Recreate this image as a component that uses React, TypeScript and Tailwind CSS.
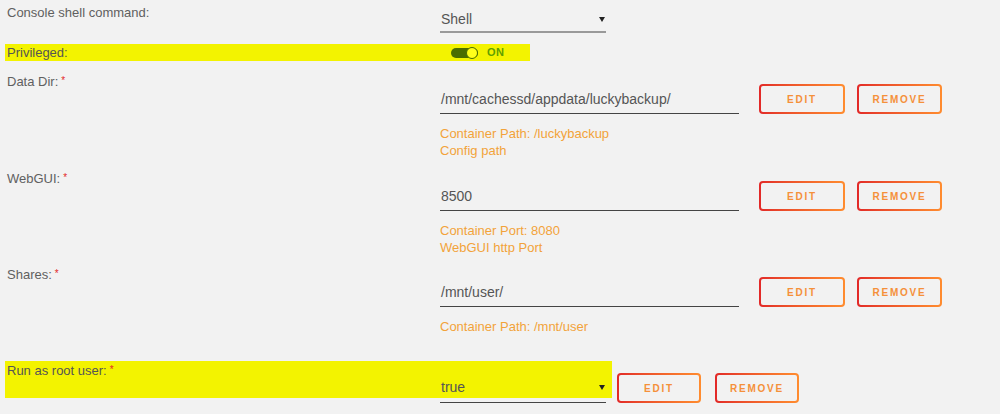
import React from 'react';

const sans = "font-['Liberation_Sans',Arial,sans-serif]";

// red marker for required fields
const Required = () => (
  <span className="relative -top-[2px] ml-[3px] text-[10px] leading-none text-[#e22828]">*</span>
);

const Caret = () => (
  <svg width="6" height="5" viewBox="0 0 6 5" className="shrink-0">
    <polygon points="0,0 6,0 3,5" fill="#222" />
  </svg>
);

interface ActionButtonProps {
  label: string;
  width: string;
}

// gradient-outlined EDIT / REMOVE buttons
const ActionButton: React.FC<ActionButtonProps> = ({ label, width }) => (
  <div className={`h-[30px] ${width} rounded-[4px] bg-linear-to-r from-[#e22828] to-[#ff8c2f] p-[2px]`}>
    <div className="flex h-full items-center justify-center rounded-[2px] bg-[#f2f2f2] text-[10px] font-bold tracking-[1.8px] text-[#f5903a]">
      {label}
    </div>
  </div>
);

interface PathRowProps {
  label: string;
  value: string;
  notes: string[];
  height: string;
}

const PathRow: React.FC<PathRowProps> = ({ label, value, notes, height }) => (
  <div className={`flex pl-[7px] ${height}`}>
    <div className="w-[433px] text-[13px] leading-[17px] text-[#606060]">
      {label}:<Required />
    </div>
    <div>
      <div className="flex items-end">
        <div className="w-[299px] border-b border-[#444] pt-[18px] pb-[5px] pl-[1px] text-[14px] leading-[17px] text-[#555]">
          {value}
        </div>
        <div className="ml-[20px] flex gap-[12px]">
          <ActionButton label="EDIT" width="w-[86px]" />
          <ActionButton label="REMOVE" width="w-[85px]" />
        </div>
      </div>
      <div className="mt-[11px] text-[13px] leading-[17px] text-[#f2a33a]">
        {notes.map((note, index) => (
          <div key={index}>{note}</div>
        ))}
      </div>
    </div>
  </div>
);

export default function App() {
  return (
    <div className={`h-[414px] w-[1000px] overflow-hidden bg-[#f2f2f2] ${sans}`}>
      {/* Console shell */}
      <div className="flex pt-[4px] pl-[7px]">
        <div className="w-[433px] text-[13px] leading-[17px] text-[#606060]">Console shell command:</div>
        <div className="mt-[7px] flex w-[166px] items-center justify-between border-b-2 border-[#9a9a9a] pb-[3px] pl-[1px] pr-[1px]">
          <span className="text-[14px] leading-[17px] text-[#555]">Shell</span>
          <Caret />
        </div>
      </div>

      {/* Privileged toggle */}
      <div className="mt-[11px] ml-[5px] flex h-[17px] w-[525px] items-center bg-[#f3f300]">
        <div className="w-[435px] pl-[2px] text-[13px] leading-[17px] text-[#555]">Privileged:</div>
        <div className="relative ml-[11px] h-[10px] w-[27px] rounded-full bg-[#4a6d00]">
          <div className="absolute -top-[1px] right-0 h-[12px] w-[12px] rounded-full border border-[#4a6d00] bg-[#ffff1a]" />
        </div>
        <span className="ml-[9px] text-[11px] font-bold tracking-[0.5px] text-[#5ea000]">ON</span>
      </div>

      <div className="mt-[12px]">
        <PathRow
          label="Data Dir"
          value="/mnt/cachessd/appdata/luckybackup/"
          notes={['Container Path: /luckybackup', 'Config path']}
          height="h-[97px]"
        />
        <PathRow
          label="WebGUI"
          value="8500"
          notes={['Container Port: 8080', 'WebGUI http Port']}
          height="h-[96px]"
        />
        <PathRow
          label="Shares"
          value="/mnt/user/"
          notes={['Container Path: /mnt/user']}
          height="h-[95px]"
        />

        {/* Run as root */}
        <div className="flex items-start">
          <div className="ml-[5px] flex h-[37px] w-[607px] items-start bg-[#f3f300]">
            <div className="w-[435px] pt-[1px] pl-[2px] text-[13px] leading-[17px] text-[#555]">
              Run as root user:<Required />
            </div>
            <div className="mt-[18px] flex w-[166px] items-center justify-between border-b border-[#444] pb-[6px] pl-[1px] pr-[1px]">
              <span className="text-[14px] leading-[17px] text-[#555]">true</span>
              <Caret />
            </div>
          </div>
          <div className="mt-[12px] ml-[5px] flex gap-[14px]">
            <ActionButton label="EDIT" width="w-[84px]" />
            <ActionButton label="REMOVE" width="w-[84px]" />
          </div>
        </div>
      </div>
    </div>
  );
}
